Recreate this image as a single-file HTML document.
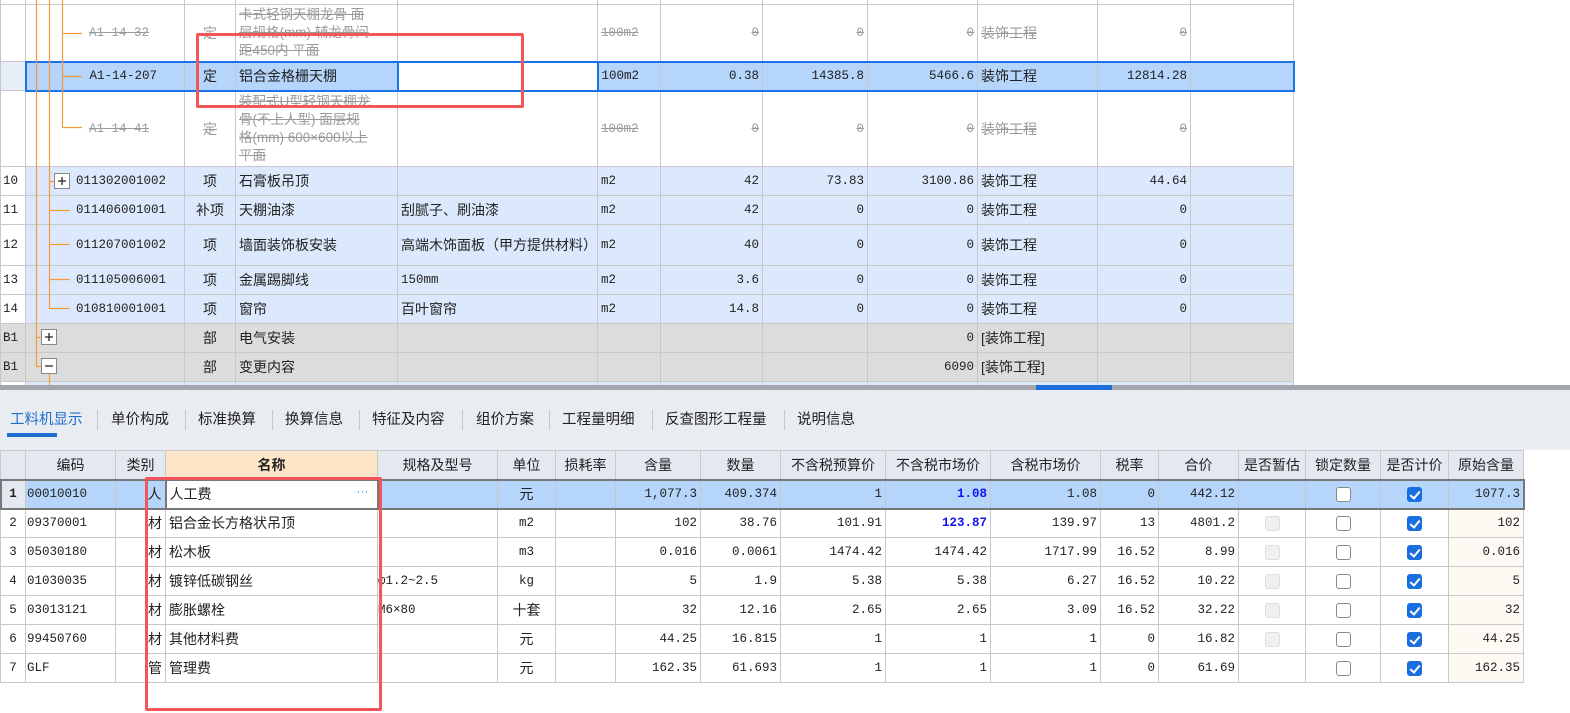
<!DOCTYPE html>
<html><head><meta charset="utf-8"><style>
*{margin:0;padding:0;box-sizing:border-box}
body{width:1570px;height:713px;overflow:hidden;background:#fff;font-family:"Liberation Sans","Noto Sans CJK SC",sans-serif;font-size:14px;color:#222;position:relative}
table{border-collapse:collapse;table-layout:fixed;position:absolute}
td{border:1px solid #c8c8c8;white-space:nowrap;overflow:hidden;padding:0 3px;vertical-align:middle}
.m{font-family:"Liberation Mono",monospace;font-size:12.5px}
.r{text-align:right}.c{text-align:center}
.s{color:#9a9a9a;text-decoration:line-through;white-space:normal;line-height:18px}
.sel td{background:#b5d5fb}
.bl td{background:#dce9fc}
.gr td{background:#dcdcdc}
.w{background:#fff!important}
#t1 td.n{background:#fff;padding:0 2px}
.tabs{position:absolute;left:0;top:390px;width:1570px;height:60px;background:#e9ecf0}
.tabs span{position:absolute;top:18px;font-size:14.5px;color:#222}
.tabs i{position:absolute;top:20px;width:1px;height:20px;background:#c4c8ce}
#t2 td{height:29px}
#t2 .h td{background:#e4e9f1;text-align:center;font-size:14px}
.cb{display:inline-block;width:15px;height:15px;border:1px solid #8a8a8a;border-radius:3px;background:#fff;vertical-align:middle}
.ck{background:#1a6fe0;border-color:#1a6fe0;position:relative}
.ck:after{content:"";position:absolute;left:4px;top:1px;width:4px;height:8px;border:solid #fff;border-width:0 2px 2px 0;transform:rotate(40deg)}
.dis{background:#f0f0f0;border-color:#ddd}
.cr td:last-child{background:#fdf9f3}
.a1{padding-left:63px!important}
.cd{padding-left:50px!important}
</style></head><body>

<table id="t1" style="left:0;top:-1px;width:1293px">
<colgroup><col style="width:25px"><col style="width:159px"><col style="width:51px"><col style="width:162px"><col style="width:200px"><col style="width:63px"><col style="width:102px"><col style="width:105px"><col style="width:110px"><col style="width:120px"><col style="width:93px"><col style="width:103px"></colgroup>
<tr style="height:5px"><td class="n"></td><td></td><td></td><td></td><td></td><td></td><td></td><td></td><td></td><td></td><td></td><td></td></tr>
<tr style="height:57px"><td class="n"></td><td class="m s a1" style="white-space:nowrap">A1-14-32</td><td class="c s">定</td><td class="s" style="font-size:13.5px">卡式轻钢天棚龙骨 面<br>层规格(mm) 辅龙骨间<br>距450内 平面</td><td></td><td class="m s" style="white-space:nowrap">100m2</td><td class="m r s">0</td><td class="m r s">0</td><td class="m r s">0</td><td class="s" style="white-space:nowrap">装饰工程</td><td class="m r s">0</td><td></td></tr>
<tr class="sel" style="height:29px"><td class="n" style="background:#e8eef8!important"></td><td class="m a1" style="border-top:2px solid #1a73e8;border-bottom:2px solid #1a73e8;border-left:2px solid #1a73e8">A1-14-207</td><td class="c" style="border-top:2px solid #1a73e8;border-bottom:2px solid #1a73e8">定</td><td style="border-top:2px solid #1a73e8;border-bottom:2px solid #1a73e8">铝合金格栅天棚</td><td class="w" style="border:2px solid #1a73e8"></td><td class="m" style="border-top:2px solid #1a73e8;border-bottom:2px solid #1a73e8">100m2</td><td class="m r" style="border-top:2px solid #1a73e8;border-bottom:2px solid #1a73e8">0.38</td><td class="m r" style="border-top:2px solid #1a73e8;border-bottom:2px solid #1a73e8">14385.8</td><td class="m r" style="border-top:2px solid #1a73e8;border-bottom:2px solid #1a73e8">5466.6</td><td style="border-top:2px solid #1a73e8;border-bottom:2px solid #1a73e8">装饰工程</td><td class="m r" style="border-top:2px solid #1a73e8;border-bottom:2px solid #1a73e8">12814.28</td><td style="border:2px solid #1a73e8;border-left:1px solid #c8c8c8"></td></tr>
<tr style="height:76px"><td class="n"></td><td class="m s a1" style="white-space:nowrap">A1-14-41</td><td class="c s">定</td><td class="s" style="font-size:13.5px">装配式U型轻钢天棚龙<br>骨(不上人型) 面层规<br>格(mm) 600×600以上<br>平面</td><td></td><td class="m s" style="white-space:nowrap">100m2</td><td class="m r s">0</td><td class="m r s">0</td><td class="m r s">0</td><td class="s" style="white-space:nowrap">装饰工程</td><td class="m r s">0</td><td></td></tr>
<tr class="bl" style="height:29px"><td class="n m">10</td><td class="m cd">011302001002</td><td class="c">项</td><td>石膏板吊顶</td><td></td><td class="m">m2</td><td class="m r">42</td><td class="m r">73.83</td><td class="m r">3100.86</td><td>装饰工程</td><td class="m r">44.64</td><td></td></tr>
<tr class="bl" style="height:29px"><td class="n m">11</td><td class="m cd">011406001001</td><td class="c">补项</td><td>天棚油漆</td><td>刮腻子、刷油漆</td><td class="m">m2</td><td class="m r">42</td><td class="m r">0</td><td class="m r">0</td><td>装饰工程</td><td class="m r">0</td><td></td></tr>
<tr class="bl" style="height:41px"><td class="n m">12</td><td class="m cd">011207001002</td><td class="c">项</td><td>墙面装饰板安装</td><td style="white-space:normal;line-height:17px">高端木饰面板（甲方提供材料）</td><td class="m">m2</td><td class="m r">40</td><td class="m r">0</td><td class="m r">0</td><td>装饰工程</td><td class="m r">0</td><td></td></tr>
<tr class="bl" style="height:29px"><td class="n m">13</td><td class="m cd">011105006001</td><td class="c">项</td><td>金属踢脚线</td><td class="m">150mm</td><td class="m">m2</td><td class="m r">3.6</td><td class="m r">0</td><td class="m r">0</td><td>装饰工程</td><td class="m r">0</td><td></td></tr>
<tr class="bl" style="height:29px"><td class="n m">14</td><td class="m cd">010810001001</td><td class="c">项</td><td>窗帘</td><td>百叶窗帘</td><td class="m">m2</td><td class="m r">14.8</td><td class="m r">0</td><td class="m r">0</td><td>装饰工程</td><td class="m r">0</td><td></td></tr>
<tr class="gr" style="height:29px"><td class="n m" style="background:#dcdcdc">B1</td><td></td><td class="c">部</td><td>电气安装</td><td></td><td></td><td></td><td></td><td class="m r">0</td><td>[装饰工程]</td><td></td><td></td></tr>
<tr class="gr" style="height:29px"><td class="n m" style="background:#dcdcdc">B1</td><td></td><td class="c">部</td><td>变更内容</td><td></td><td></td><td></td><td></td><td class="m r">6090</td><td>[装饰工程]</td><td></td><td></td></tr>
<tr class="bl" style="height:10px"><td class="n"></td><td></td><td></td><td></td><td></td><td></td><td></td><td></td><td></td><td></td><td></td><td></td></tr>
</table>

<svg style="position:absolute;left:0;top:0" width="100" height="386">
<g stroke="#f59a3c" stroke-width="1.2" fill="none">
<path d="M36.5 0V366.5H41M36.5 337.5H41"/>
<path d="M49.5 0V308.5H70M49.5 181.5H54M49.5 210.5H70M49.5 244.5H70M49.5 279.5H70M49.5 374V386"/>
<path d="M62.5 0V127.5H82M62.5 33.5H82M62.5 76.5H82"/>
</g>
<g stroke="#888" fill="#fff"><rect x="54.5" y="173.5" width="15" height="15"/><rect x="41.5" y="329.5" width="15" height="15"/><rect x="41.5" y="358.5" width="15" height="15"/></g>
<g stroke="#222" stroke-width="1.3"><path d="M58 181H66M62 177V185M45 337H53M49 333V341M45 366H53"/></g>
</svg>

<div style="position:absolute;left:0;top:385px;width:1570px;height:6px;background:#a3a6ab"></div>
<div style="position:absolute;left:1036px;top:385px;width:76px;height:6px;background:#1a6fd8"></div>
<div class="tabs">
<span style="left:10px;color:#1f6fd1">工料机显示</span><div style="position:absolute;left:7px;top:43px;width:50px;height:4px;background:#1f6fd1"></div>
<i style="left:97px"></i><span style="left:111px">单价构成</span>
<i style="left:185px"></i><span style="left:198px">标准换算</span>
<i style="left:272px"></i><span style="left:285px">换算信息</span>
<i style="left:359px"></i><span style="left:372px">特征及内容</span>
<i style="left:462px"></i><span style="left:476px">组价方案</span>
<i style="left:549px"></i><span style="left:562px">工程量明细</span>
<i style="left:652px"></i><span style="left:665px">反查图形工程量</span>
<i style="left:784px"></i><span style="left:797px">说明信息</span>
</div>

<table id="t2" style="left:0;top:450px;width:1523px">
<colgroup><col style="width:25px"><col style="width:90px"><col style="width:50px"><col style="width:212px"><col style="width:120px"><col style="width:58px"><col style="width:60px"><col style="width:85px"><col style="width:80px"><col style="width:105px"><col style="width:105px"><col style="width:110px"><col style="width:58px"><col style="width:80px"><col style="width:67px"><col style="width:75px"><col style="width:68px"><col style="width:75px"></colgroup>
<tr class="h"><td></td><td>编码</td><td>类别</td><td style="background:#fde5c8;font-weight:bold">名称</td><td>规格及型号</td><td>单位</td><td>损耗率</td><td>含量</td><td>数量</td><td>不含税预算价</td><td>不含税市场价</td><td>含税市场价</td><td>税率</td><td>合价</td><td>是否暂估</td><td>锁定数量</td><td>是否计价</td><td>原始含量</td></tr>
<tr class="sel" style="outline:2px solid #777;outline-offset:-1px"><td class="c m" style="background:#e4e9f1;font-weight:bold">1</td><td class="m" style="padding:0 1px">00010010</td><td class="r">人</td><td class="w" style="border:2px solid #777;position:relative">人工费<span style="position:absolute;right:8px;top:3px;color:#4a8fd8;font-size:12px">···</span></td><td></td><td class="c">元</td><td></td><td class="m r">1,077.3</td><td class="m r">409.374</td><td class="m r">1</td><td class="m r" style="color:#1414f0;font-weight:bold">1.08</td><td class="m r">1.08</td><td class="m r">0</td><td class="m r">442.12</td><td></td><td class="c"><span class="cb"></span></td><td class="c"><span class="cb ck"></span></td><td class="m r">1077.3</td></tr>
<tr class="cr" style="height:28px"><td class="c m">2</td><td class="m" style="padding:0 1px">09370001</td><td class="r">材</td><td>铝合金长方格状吊顶</td><td></td><td class="c m">m2</td><td></td><td class="m r">102</td><td class="m r">38.76</td><td class="m r">101.91</td><td class="m r" style="color:#1414f0;font-weight:bold">123.87</td><td class="m r">139.97</td><td class="m r">13</td><td class="m r">4801.2</td><td class="c"><span class="cb dis"></span></td><td class="c"><span class="cb"></span></td><td class="c"><span class="cb ck"></span></td><td class="m r">102</td></tr>
<tr class="cr"><td class="c m">3</td><td class="m" style="padding:0 1px">05030180</td><td class="r">材</td><td>松木板</td><td></td><td class="c m">m3</td><td></td><td class="m r">0.016</td><td class="m r">0.0061</td><td class="m r">1474.42</td><td class="m r">1474.42</td><td class="m r">1717.99</td><td class="m r">16.52</td><td class="m r">8.99</td><td class="c"><span class="cb dis"></span></td><td class="c"><span class="cb"></span></td><td class="c"><span class="cb ck"></span></td><td class="m r">0.016</td></tr>
<tr class="cr" style="height:28px"><td class="c m">4</td><td class="m" style="padding:0 1px">01030035</td><td class="r">材</td><td>镀锌低碳钢丝</td><td class="m" style="padding:0">φ1.2~2.5</td><td class="c m">kg</td><td></td><td class="m r">5</td><td class="m r">1.9</td><td class="m r">5.38</td><td class="m r">5.38</td><td class="m r">6.27</td><td class="m r">16.52</td><td class="m r">10.22</td><td class="c"><span class="cb dis"></span></td><td class="c"><span class="cb"></span></td><td class="c"><span class="cb ck"></span></td><td class="m r">5</td></tr>
<tr class="cr"><td class="c m">5</td><td class="m" style="padding:0 1px">03013121</td><td class="r">材</td><td>膨胀螺栓</td><td class="m" style="padding:0">M6×80</td><td class="c">十套</td><td></td><td class="m r">32</td><td class="m r">12.16</td><td class="m r">2.65</td><td class="m r">2.65</td><td class="m r">3.09</td><td class="m r">16.52</td><td class="m r">32.22</td><td class="c"><span class="cb dis"></span></td><td class="c"><span class="cb"></span></td><td class="c"><span class="cb ck"></span></td><td class="m r">32</td></tr>
<tr class="cr" style="height:28px"><td class="c m">6</td><td class="m" style="padding:0 1px">99450760</td><td class="r">材</td><td>其他材料费</td><td></td><td class="c">元</td><td></td><td class="m r">44.25</td><td class="m r">16.815</td><td class="m r">1</td><td class="m r">1</td><td class="m r">1</td><td class="m r">0</td><td class="m r">16.82</td><td class="c"><span class="cb dis"></span></td><td class="c"><span class="cb"></span></td><td class="c"><span class="cb ck"></span></td><td class="m r">44.25</td></tr>
<tr class="cr"><td class="c m">7</td><td class="m" style="padding:0 1px">GLF</td><td class="r">管</td><td>管理费</td><td></td><td class="c">元</td><td></td><td class="m r">162.35</td><td class="m r">61.693</td><td class="m r">1</td><td class="m r">1</td><td class="m r">1</td><td class="m r">0</td><td class="m r">61.69</td><td></td><td class="c"><span class="cb"></span></td><td class="c"><span class="cb ck"></span></td><td class="m r">162.35</td></tr>
</table>

<div style="position:absolute;left:196px;top:33px;width:328px;height:75px;border:3px solid #f2555a;border-radius:2px"></div>
<div style="position:absolute;left:145px;top:477px;width:237px;height:234px;border:3px solid #f2555a;border-radius:2px"></div>
</body></html>
